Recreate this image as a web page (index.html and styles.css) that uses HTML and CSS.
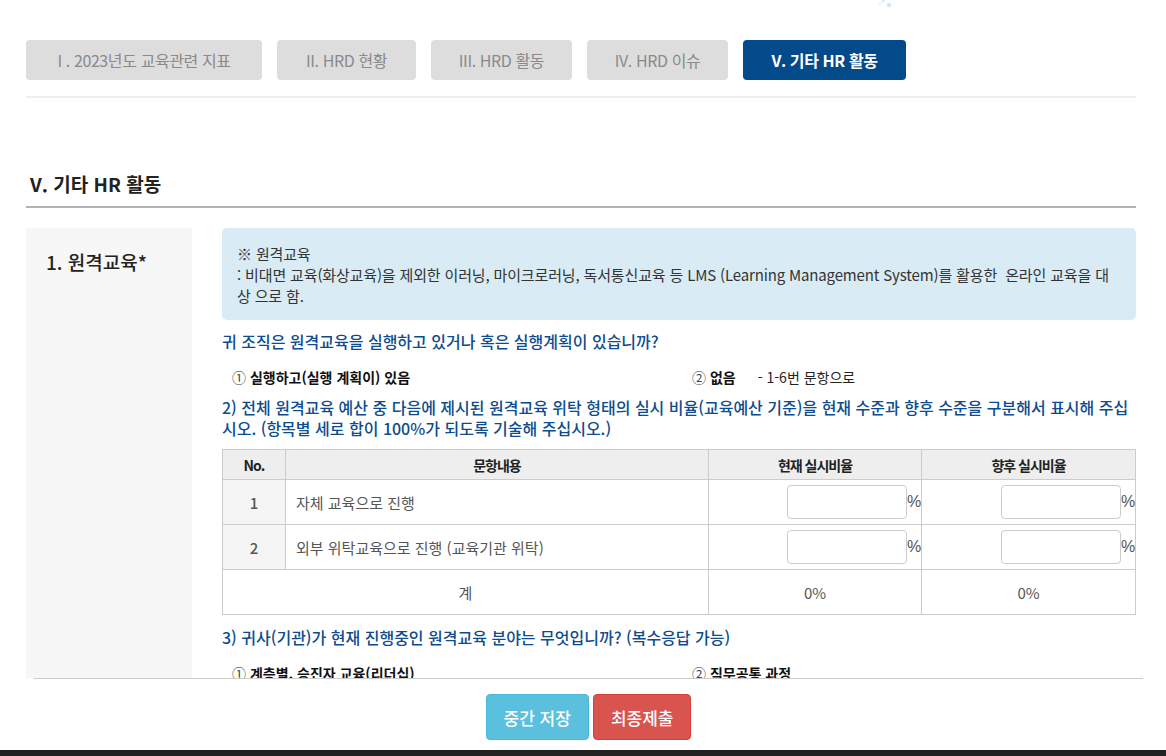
FILE: index.html
```html
<!DOCTYPE html>
<html lang="ko">
<head>
<meta charset="utf-8">
<title>V. 기타 HR 활동</title>
<link rel="stylesheet" href="styles.css">
</head>
<body>
<div class="app">
  <svg class="dots" width="20" height="10" viewBox="0 0 20 10" aria-hidden="true">
    <circle cx="6" cy="1" r="1.6" fill="#d6ecf9"/>
    <circle cx="12" cy="5" r="2.2" fill="#cde8f8"/>
    <circle cx="3" cy="4" r="1.2" fill="#e3f2fb"/>
  </svg>
  <div class="scroll">
    <nav class="tabs">
      <div class="tab t1">I . 2023년도 교육관련 지표</div>
      <div class="tab t2">II. HRD 현황</div>
      <div class="tab t3">III. HRD 활동</div>
      <div class="tab t4">IV. HRD 이슈</div>
      <div class="tab t5 active">V. 기타 HR 활동</div>
    </nav>
    <div class="divider"></div>

    <h2 class="title">V. 기타 HR 활동</h2>

    <section class="section">
      <div class="label">1. 원격교육*</div>
      <div class="body">
        <div class="info">
          ※ 원격교육<br>
          : 비대면 교육(화상교육)을 제외한 이러닝, 마이크로러닝, 독서통신교육 등 LMS (Learning Management System)를 활용한&nbsp; 온라인 교육을 대 상 으로 함.
        </div>

        <p class="q q1">귀 조직은 원격교육을 실행하고 있거나 혹은 실행계획이 있습니까?</p>
        <div class="opts o1">
          <div class="opt"><span class="num">①</span> <b>실행하고(실행 계획이) 있음</b></div>
          <div class="opt"><span class="num">②</span> <b>없음</b><span class="note">- 1-6번 문항으로</span></div>
        </div>

        <p class="q q2">2) 전체 원격교육 예산 중 다음에 제시된 원격교육 위탁 형태의 실시 비율(교육예산 기준)을 현재 수준과 향후 수준을 구분해서 표시해 주십시오. (항목별 세로 합이 100%가 되도록 기술해 주십시오.)</p>

        <table class="grid">
          <colgroup>
            <col class="c-no"><col class="c-txt"><col class="c-now"><col>
          </colgroup>
          <thead>
            <tr><th>No.</th><th>문항내용</th><th>현재 실시비율</th><th>향후 실시비율</th></tr>
          </thead>
          <tbody>
            <tr>
              <td class="no">1</td>
              <td class="txt">자체 교육으로 진행</td>
              <td class="inp"><input type="text"><span class="pct">%</span></td>
              <td class="inp"><input type="text"><span class="pct">%</span></td>
            </tr>
            <tr>
              <td class="no">2</td>
              <td class="txt">외부 위탁교육으로 진행 (교육기관 위탁)</td>
              <td class="inp"><input type="text"><span class="pct">%</span></td>
              <td class="inp"><input type="text"><span class="pct">%</span></td>
            </tr>
            <tr class="sum">
              <td colspan="2">계</td>
              <td>0%</td>
              <td>0%</td>
            </tr>
          </tbody>
        </table>

        <p class="q q3">3) 귀사(기관)가 현재 진행중인 원격교육 분야는 무엇입니까? (복수응답 가능)</p>
        <div class="opts o3">
          <div class="opt"><span class="num">①</span> <b>계층별, 승진자 교육(리더십)</b></div>
          <div class="opt"><span class="num">②</span> <b>직무공통 과정</b></div>
        </div>
      </div>
    </section>
  </div>

  <footer class="footer">
    <button class="btn save">중간 저장</button>
    <button class="btn submit">최종제출</button>
  </footer>
  <div class="darkbar"></div>
</div>
</body>
</html>
```
FILE: styles.css
```css
* { box-sizing: border-box; }
html, body { margin: 0; padding: 0; }
body {
  font-family: "Noto Sans CJK KR", "Noto Sans", sans-serif;
  color: #333;
  background: #fff;
}
.app {
  position: relative;
  height: 756px;
  display: flex;
  flex-direction: column;
  overflow: hidden;
}
.dots { position: absolute; left: 877px; top: 0; }

.scroll {
  flex: 1;
  overflow: hidden;
  padding: 40px 30px 0 26px;
}

/* tabs */
.tabs { display: flex; gap: 15px; height: 40px; }
.tab {
  display: flex;
  align-items: center;
  justify-content: center;
  background: #ddd;
  color: #8a8a8a;
  border-radius: 4px;
  font-size: 16px;
  letter-spacing: -0.4px;
  white-space: nowrap;
}
.t1 { width: 236px; }
.t2 { width: 139px; }
.t3 { width: 141px; }
.t4 { width: 141px; }
.t5 { width: 163px; }
.tab.active { background: #034a8b; color: #fff; font-weight: 700; }
.divider { margin-top: 16px; height: 2px; background: #eee; }

/* title */
.title {
  margin: 72px 0 0;
  padding: 0 0 9px 4px;
  font-size: 19px;
  line-height: 27px;
  font-weight: 700;
  color: #222;
  border-bottom: 2px solid #b3b3b3;
}

/* section */
.section {
  margin-top: 20px;
  display: grid;
  grid-template-columns: 166px 1fr;
  column-gap: 30px;
}
.label {
  background: #f7f7f7;
  padding: 20px 20px;
  font-size: 19px;
  line-height: 27px;
  font-weight: 500;
  color: #222;
  min-height: 520px;
}
.body { min-width: 0; }

.info {
  background: #d9ecf5;
  border-radius: 5px;
  padding: 15px 16px 14px 15px;
  font-size: 15px;
  line-height: 21px;
  letter-spacing: -0.15px;
  color: #333;
}

.q {
  margin: 0;
  color: #0d4c8e;
  font-size: 16px;
  font-weight: 500;
  line-height: 21px;
}
.q1 { margin-top: 11px; }
.q2 { margin-top: 10px; }
.q3 { margin-top: 12px; }

.opts {
  display: grid;
  grid-template-columns: 460px 1fr;
  padding-left: 10px;
  font-size: 14px;
  line-height: 20px;
  color: #111;
}
.o1 { margin-top: 15px; }
.o3 { margin-top: 15px; }
.opt b { font-weight: 700; }
.num { font-weight: 400; color: #444; }
.note { margin-left: 22px; font-weight: 400; color: #222; }

/* table */
.grid {
  margin-top: 10px;
  width: 100%;
  border-collapse: collapse;
  font-size: 15px;
}
.c-no { width: 63px; }
.c-txt { width: 423px; }
.c-now { width: 213px; }
.grid th, .grid td { border: 1px solid #ccc; }
.grid th {
  height: 30px;
  background: #eee;
  font-size: 14px;
  font-weight: 700;
  letter-spacing: -1px;
  color: #222;
  padding: 0;
}
.grid td { height: 45px; padding: 0; color: #555; }
.grid td.no { text-align: center; background: #f5f5f5; font-weight: 500; }
.grid td.txt { padding-left: 10px; }
.grid td.inp { text-align: right; white-space: nowrap; }
.grid input {
  width: 120px;
  height: 34px;
  border: 1px solid #ccc;
  border-radius: 4px;
  vertical-align: middle;
  margin: 0;
  font: inherit;
}
.pct {
  display: inline-block;
  width: 14px;
  text-align: left;
  vertical-align: middle;
  font-family: "Liberation Sans", Arial, sans-serif;
  font-size: 16px;
  color: #555;
}
.sum td { text-align: center; }

/* footer */
.footer {
  flex: none;
  height: 72px;
  margin: 0 23px 0 34px;
  border-top: 1px solid #ccc;
  display: flex;
  justify-content: center;
  align-items: flex-start;
  gap: 4px;
  padding-top: 15px;
  background: #fff;
}
.btn {
  height: 46px;
  padding: 0 17px;
  border-radius: 4px;
  border: 1px solid transparent;
  color: #fff;
  font-family: inherit;
  font-size: 17px;
  font-weight: 500;
}
.save { background: #5bc0de; border-color: #46b8da; }
.submit { background: #d9534f; border-color: #d43f3a; }
.darkbar { flex: none; height: 6px; background: #222; }
```
